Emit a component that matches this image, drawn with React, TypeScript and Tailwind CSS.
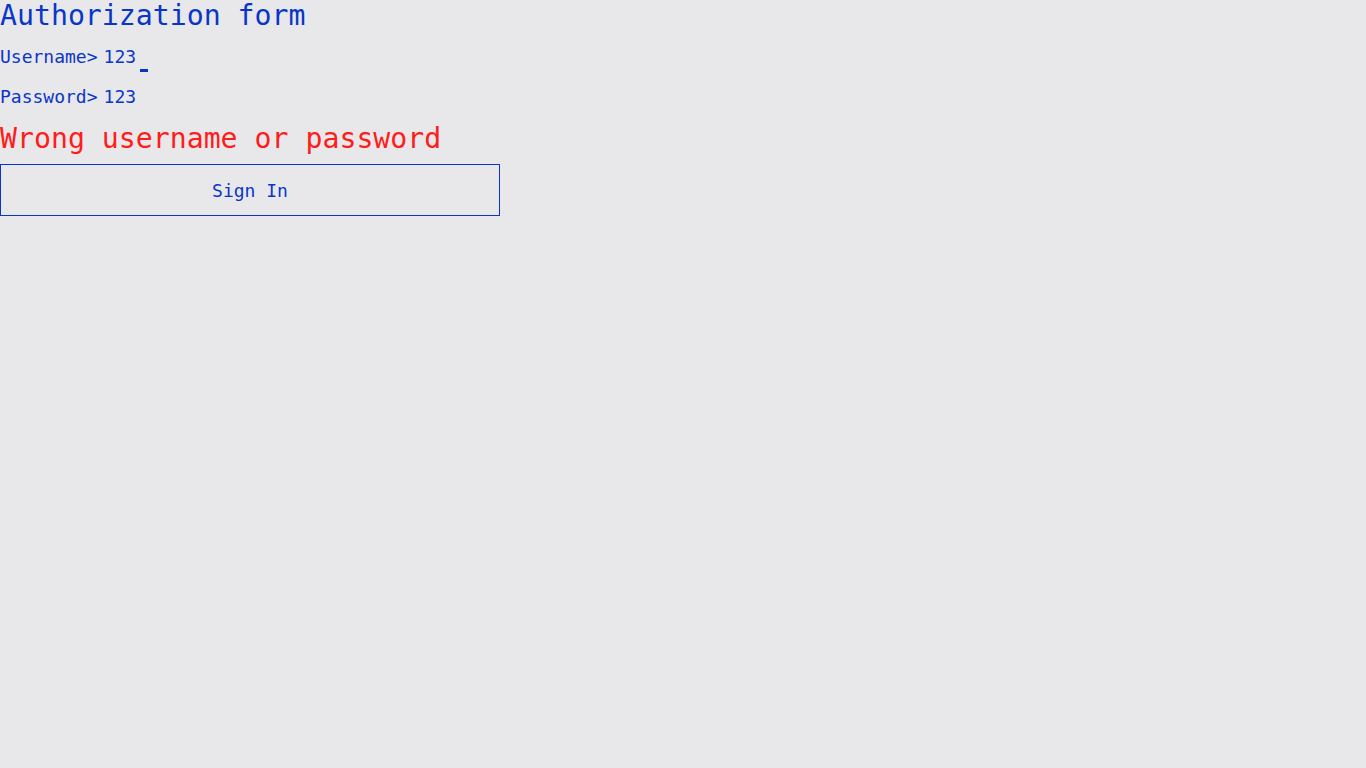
import { useState } from 'react'

const FONT = { fontFamily: '"DejaVu Sans Mono", "Liberation Mono", monospace' }

function Field({ label, value, focused }: { label: string; value: string; focused?: boolean }) {
  return (
    <div className="flex items-center h-[40px] text-[18px] leading-[24px]">
      <span>{label}</span>
      <span className="ml-[6px] relative">
        {value}
        {focused && <span className="absolute left-[36px] top-[24px] w-[8px] h-[3px] bg-[#0a36c8]" />}
      </span>
    </div>
  )
}

export default function App() {
  const [user] = useState('123')
  const [pass] = useState('123')

  return (
    <div className="min-h-screen w-full bg-[#e8e8ea] text-[#0a36c8]" style={FONT}>
      <div className="w-[500px] flex flex-col">
        <h1 className="text-[28.2px] leading-[32px] h-[32px]">Authorization form</h1>
        <div className="mt-[5px]">
          <Field label="Username>" value={user} focused />
          <Field label="Password>" value={pass} />
        </div>
        <p className="mt-[2px] text-[28.2px] leading-[40px] text-[#ff1c1c]">Wrong username or password</p>
        <button className="mt-[5px] h-[52px] w-[500px] border border-[#0a36c8] text-[18px] flex items-center justify-center">
          Sign In
        </button>
      </div>
    </div>
  )
}
